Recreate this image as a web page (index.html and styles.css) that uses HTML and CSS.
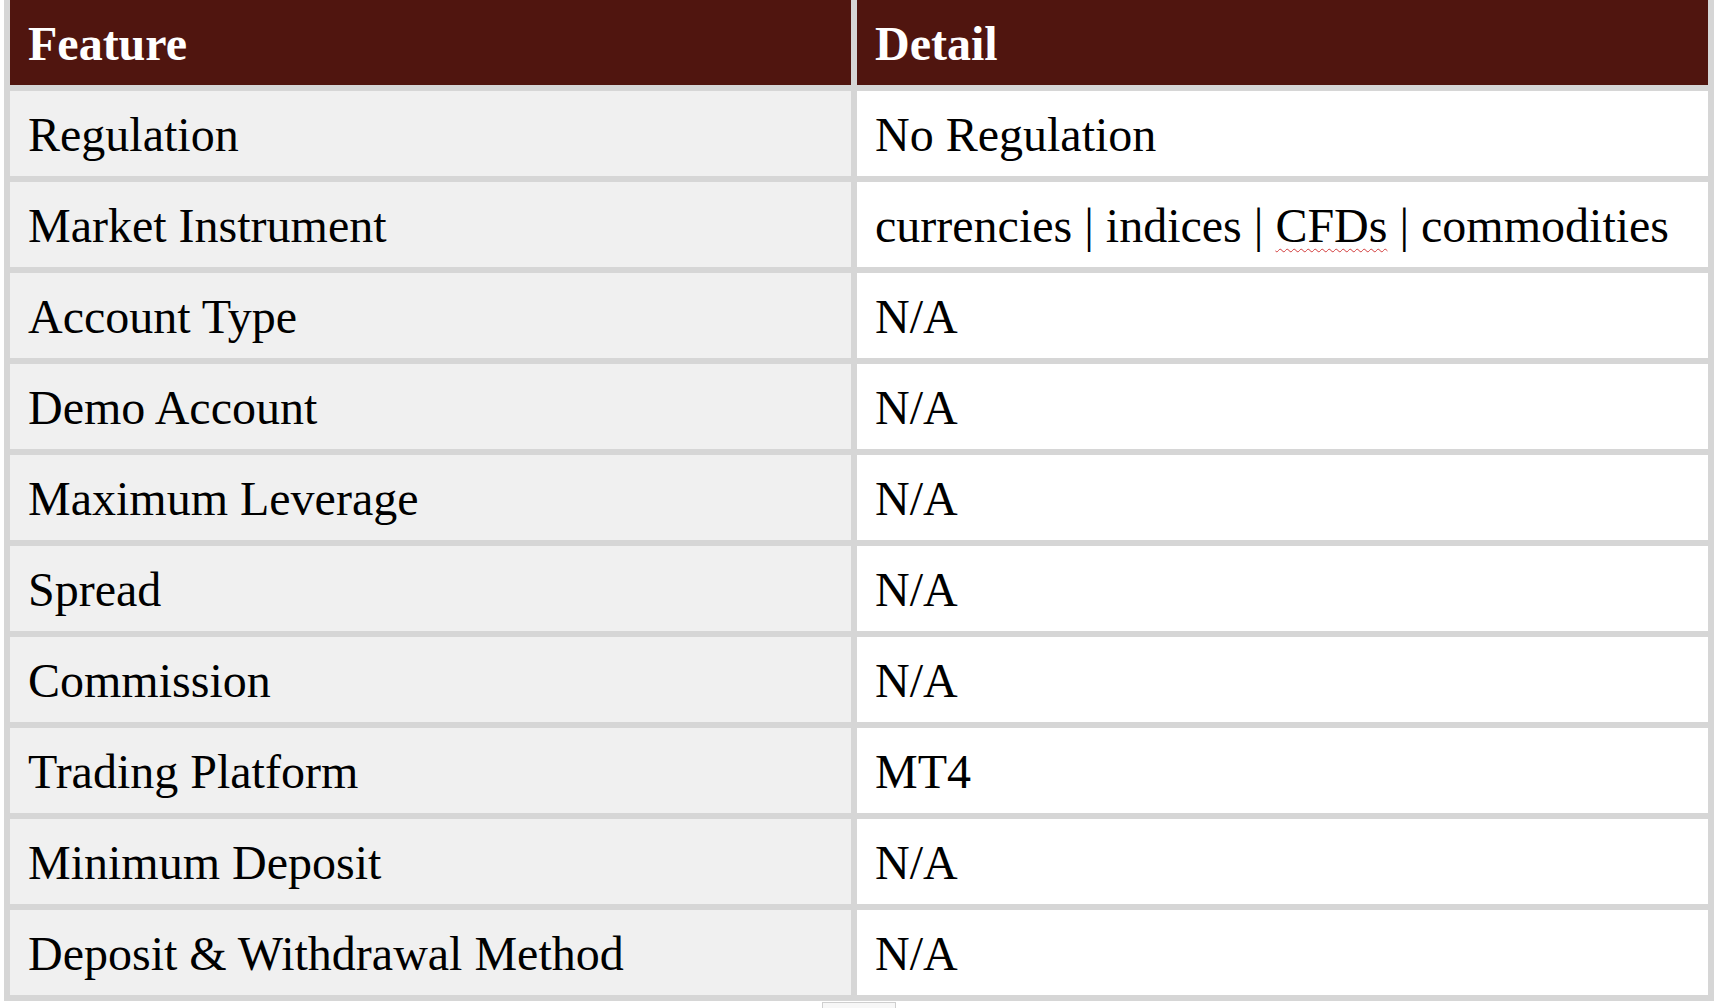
FILE: index.html
```html
<!DOCTYPE html>
<html lang="en">
<head>
<meta charset="utf-8">
<title>Feature / Detail</title>
<link rel="stylesheet" href="styles.css">
</head>
<body>
<div class="sheet">
  <div class="grid">
    <div class="cell head">Feature</div>
    <div class="cell head">Detail</div>

    <div class="cell key">Regulation</div>
    <div class="cell val">No Regulation</div>

    <div class="cell key">Market Instrument</div>
    <div class="cell val">currencies | indices | <span class="spell">CFDs</span> | commodities</div>

    <div class="cell key">Account Type</div>
    <div class="cell val">N/A</div>

    <div class="cell key">Demo Account</div>
    <div class="cell val">N/A</div>

    <div class="cell key">Maximum Leverage</div>
    <div class="cell val">N/A</div>

    <div class="cell key">Spread</div>
    <div class="cell val">N/A</div>

    <div class="cell key">Commission</div>
    <div class="cell val">N/A</div>

    <div class="cell key">Trading Platform</div>
    <div class="cell val">MT4</div>

    <div class="cell key">Minimum Deposit</div>
    <div class="cell val">N/A</div>

    <div class="cell key">Deposit &amp; Withdrawal Method</div>
    <div class="cell val">N/A</div>
  </div>
  <div class="handle"></div>
</div>
</body>
</html>
```

FILE: styles.css
```css
html, body {
  margin: 0;
  padding: 0;
  background: #ffffff;
}

body {
  font-family: "Liberation Serif", "Times New Roman", serif;
  color: #000000;
  overflow: hidden;
}

.sheet {
  width: 1718px;
  height: 1008px;
}

.grid {
  display: grid;
  grid-template-columns: 841px 851px;
  grid-auto-rows: 85px;
  gap: 6px;
  padding: 0 6px 6px;
  margin-left: 4px;
  width: max-content;
  background: #d6d6d6;
}

.cell {
  box-sizing: border-box;
  height: 85px;
  padding: 2px 17px 0 18px;
  font-size: 48px;
  line-height: 83px;
  white-space: nowrap;
}

.head {
  background: #50150f;
  color: #ffffff;
  font-weight: bold;
}

.key {
  background: #f0f0f0;
}

.val {
  background: #ffffff;
}

.spell {
  text-decoration: underline wavy #d23a3a;
  text-decoration-thickness: 1px;
  text-underline-offset: 6px;
}

.handle {
  box-sizing: border-box;
  width: 74px;
  height: 8px;
  margin-left: 822px;
  margin-top: 1px;
  border: 1px solid #cfcfcf;
  border-bottom: none;
  background: #f7f7f7;
}
```
